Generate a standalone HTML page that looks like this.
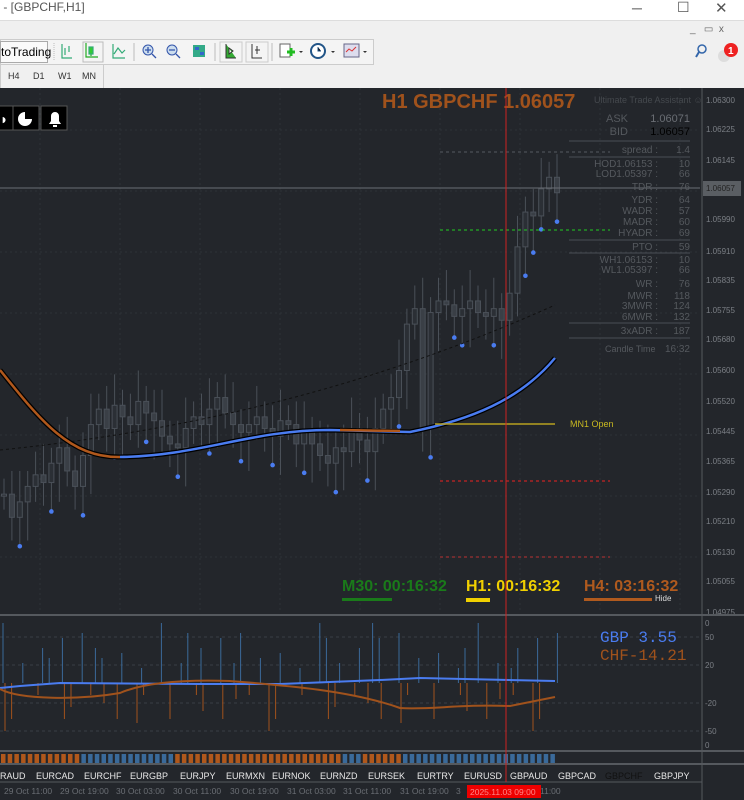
<!DOCTYPE html>
<html><head><meta charset="utf-8"><style>
*{margin:0;padding:0;box-sizing:border-box}
body{width:744px;height:800px;overflow:hidden;background:#fff;font-family:"Liberation Sans",sans-serif;position:relative}
.abs{position:absolute}
.tb{background:#f0f0f0}
.tf{position:absolute;top:71px;font-size:9px;color:#333}
</style></head><body>
<div class="abs" style="left:0;top:0;width:744px;height:20px;background:#fff;font-size:12px;color:#555;line-height:14px">&nbsp;- [GBPCHF,H1]</div>
<div class="abs" style="left:632px;top:0;font-size:14px;color:#555">─</div>
<div class="abs" style="left:677px;top:-1px;font-size:14px;color:#555">☐</div>
<div class="abs" style="left:715px;top:-1px;font-size:15px;color:#555">✕</div>
<div class="abs tb" style="left:0;top:20px;width:744px;height:68px;border-top:1px solid #ddd"></div>
<div class="abs" style="left:690px;top:24px;font-size:10px;color:#666">_&nbsp;&nbsp;&nbsp;&#9645;&nbsp;&nbsp;x</div>
<div class="abs" style="left:0;top:39px;width:374px;height:26px;border:1px solid #ccc;background:#f4f4f4"></div>
<div class="abs" style="left:0;top:41px;width:48px;height:22px;border:1px solid #aaa;background:#fafafa;font-size:12px;line-height:20px">toTrading</div>
<div class="abs" style="left:0;top:65px;width:104px;height:23px;border-right:1px solid #ccc;border-left:1px solid #ccc"></div>
<span class="tf" style="left:8px">H4</span><span class="tf" style="left:33px">D1</span><span class="tf" style="left:58px">W1</span><span class="tf" style="left:82px">MN</span>
<svg class="abs" style="left:0;top:40px" width="744" height="24">
<line x1="54" y1="3" x2="54" y2="21" stroke="#bbb" stroke-dasharray="1,1"/>
<g stroke="#3a7" fill="none" stroke-width="1.2">
<path d="M62 4v14h10M65 8v7M69 6v6"/><path d="M86 3v14h12M91 7v9" stroke="#2a2"/><rect x="89" y="7" width="4" height="7" fill="#3c3"/>
<path d="M113 4v14h12M114 14l4-6 4 5 3-3"/>
</g>
<rect x="83" y="2" width="20" height="20" fill="none" stroke="#bbb"/>
<line x1="134" y1="3" x2="134" y2="21" stroke="#bbb"/>
<circle cx="148" cy="10" r="5" fill="#cde" stroke="#35a"/><path d="M152 14l4 4M145 10h6M148 7v6" stroke="#35a" stroke-width="1.3"/>
<circle cx="172" cy="10" r="5" fill="#cde" stroke="#35a"/><path d="M176 14l4 4M169 10h6" stroke="#35a" stroke-width="1.3"/>
<rect x="193" y="5" width="12" height="12" fill="#3a8"/><rect x="195" y="7" width="4" height="3" fill="#36c"/><rect x="200" y="12" width="4" height="3" fill="#36c"/>
<line x1="215" y1="3" x2="215" y2="21" stroke="#bbb"/>
<rect x="220" y="2" width="22" height="20" fill="none" stroke="#ccc"/><rect x="246" y="2" width="22" height="20" fill="none" stroke="#ccc"/>
<path d="M226 4v14h10M229 8l4 3-4 3z" stroke="#333" fill="#3a3"/>
<path d="M252 4v14h10M257 6v8M255 10h5" stroke="#333" fill="none"/>
<line x1="272" y1="3" x2="272" y2="21" stroke="#bbb"/>
<rect x="280" y="4" width="10" height="13" fill="#fff" stroke="#666"/><path d="M287 12h8M291 8v8" stroke="#2b2" stroke-width="3"/>
<path d="M299 11l2 2 2-2z" fill="#333"/>
<circle cx="318" cy="11" r="7" fill="#fff" stroke="#258" stroke-width="2"/><path d="M318 7v4h3" stroke="#258"/>
<path d="M331 11l2 2 2-2z" fill="#333"/>
<rect x="344" y="4" width="15" height="13" fill="#dde" stroke="#668"/><path d="M346 12l3-3 3 2 4-4" stroke="#d33" fill="none"/>
<path d="M363 11l2 2 2-2z" fill="#333"/>
<circle cx="702" cy="9" r="4" fill="none" stroke="#36a" stroke-width="1.5"/><path d="M699 12l-3 5" stroke="#36a" stroke-width="2"/>
<circle cx="724" cy="16" r="6" fill="#ddd"/><circle cx="731" cy="10" r="7" fill="#e22"/><text x="728" y="14" font-size="10" fill="#fff" font-weight="bold">1</text>
</svg>
<svg class="abs" style="left:0;top:88px" width="744" height="712" id="ch">
<rect width="744" height="712" fill="#23262b"/>
</svg>
<script>
var s=document.getElementById('ch'),ns='http://www.w3.org/2000/svg';
function el(t,a,txt){var e=document.createElementNS(ns,t);for(var k in a)e.setAttribute(k,a[k]);if(txt!=null)e.textContent=txt;s.appendChild(e);return e}
var O=-88;
function Y(p){return 100+(1.063-p)/0.01325*512+O}
for(var gy=130;gy<600;gy+=61)el('line',{x1:0,y1:gy+O,x2:700,y2:gy+O,stroke:'#2e3237','stroke-dasharray':'2,3'});
for(var gx=40;gx<700;gx+=80)el('line',{x1:gx,y1:0,x2:gx,y2:525,stroke:'#2e3237','stroke-dasharray':'2,3'});
var path=[1.0528,1.0522,1.0526,1.0530,1.0533,1.0531,1.0536,1.0540,1.0534,1.0530,1.0538,1.0546,1.0550,1.0545,1.0551,1.0548,1.0546,1.0552,1.0549,1.0547,1.0543,1.0541,1.0540,1.0545,1.0548,1.0546,1.0550,1.0553,1.0549,1.0546,1.0544,1.0546,1.0548,1.0545,1.0543,1.0547,1.0546,1.0541,1.0544,1.0541,1.0538,1.0536,1.0540,1.0539,1.0545,1.0542,1.0539,1.0545,1.0550,1.0553,1.0560,1.0572,1.0576,1.0545,1.0575,1.0578,1.0577,1.0574,1.0576,1.0578,1.0575,1.0574,1.0576,1.0573,1.0580,1.0592,1.0601,1.0600,1.0607,1.0610,1.0606];
var prev=path[0];
for(var i=0;i<path.length;i++){var x=4+i*7.9,o=prev,c=path[i];var hi=Math.max(o,c)+0.0004+(i%3)*0.0002,lo=Math.min(o,c)-0.0004-(i%4)*0.0002;
el('line',{x1:x,y1:Y(hi),x2:x,y2:Y(lo),stroke:'#4a5058'});
var t=Math.min(Y(o),Y(c)),h=Math.max(2,Math.abs(Y(o)-Y(c)));
el('rect',{x:x-2.5,y:t,width:5,height:h,fill:c>=o?'#2b2f35':'#3a3f46',stroke:'#4a5058'});
prev=c;
if(i%4==2||i==57||i==67||i==68)el('circle',{cx:x,cy:Y(lo)-2,r:2.3,fill:'#4a7cf0'});}
el('path',{d:'M0 '+(450+O)+' Q300 '+(420+O)+' 555 '+(305+O),stroke:'#111',fill:'none','stroke-dasharray':'3,3'});
el('path',{d:'M0 '+(370+O)+' C40 '+(420+O)+' 70 '+(458+O)+' 120 '+(457+O)+' C200 '+(456+O)+' 250 '+(430+O)+' 330 '+(430+O)+' L410 '+(432+O)+' C470 '+(420+O)+' 520 '+(400+O)+' 555 '+(358+O),stroke:'#000',fill:'none','stroke-width':5});
el('path',{d:'M0 '+(370+O)+' C40 '+(420+O)+' 70 '+(458+O)+' 120 '+(457+O),stroke:'#b0581c',fill:'none','stroke-width':2.5});
el('path',{d:'M120 '+(457+O)+' C200 '+(456+O)+' 250 '+(430+O)+' 330 '+(430+O)+' L410 '+(432+O)+' C470 '+(420+O)+' 520 '+(400+O)+' 555 '+(358+O),stroke:'#4a7cf0',fill:'none','stroke-width':2.5});
el('path',{d:'M340 '+(430+O)+' L400 '+(431+O),stroke:'#b0581c',fill:'none','stroke-width':2.5});
el('line',{x1:0,y1:188+O,x2:700,y2:188+O,stroke:'#6a6e74'});
el('line',{x1:440,y1:152+O,x2:610,y2:152+O,stroke:'#555a60','stroke-dasharray':'3,3'});
el('line',{x1:440,y1:230+O,x2:610,y2:230+O,stroke:'#2c2','stroke-dasharray':'3,3'});
el('line',{x1:440,y1:481+O,x2:610,y2:481+O,stroke:'#e22','stroke-dasharray':'3,3'});
el('line',{x1:440,y1:557+O,x2:610,y2:557+O,stroke:'#b33','stroke-dasharray':'3,3'});
el('line',{x1:435,y1:424+O,x2:555,y2:424+O,stroke:'#b8a020','stroke-width':1.5});
el('text',{x:570,y:427+O,fill:'#c8b820','font-size':9},'MN1 Open');
var P=[['ASK',118,'1.06071','#6a6e74',11],['BID',131,'1.06057','#000',11],['spread :',149,'1.4'],['HOD1.06153 :',163,'10'],['LOD1.05397 :',173,'66'],['TDR :',186,'76'],['YDR :',199,'64'],['WADR :',210,'57'],['MADR :',221,'60'],['HYADR :',232,'69'],['PTO :',246,'59'],['WH1.06153 :',259,'10'],['WL1.05397 :',269,'66'],['WR :',283,'76'],['MWR :',295,'118'],['3MWR :',305,'124'],['6MWR :',316,'132'],['3xADR :',330,'187']];
P.forEach(function(r){el('text',{x:r[0]=='ASK'||r[0]=='BID'?628:658,y:r[1]+O+4,fill:'#55595e','font-size':r[4]||10,'text-anchor':'end'},r[0]);el('text',{x:690,y:r[1]+O+4,fill:r[3]||'#55595e','font-size':r[4]||10,'text-anchor':'end'},r[2]);});
el('text',{x:605,y:352+O,fill:'#55595e','font-size':9},'Candle Time');el('text',{x:690,y:352+O,fill:'#55595e','font-size':10,'text-anchor':'end'},'16:32');
[141,157,240,253,323,338].forEach(function(y){el('line',{x1:569,y1:y+O,x2:690,y2:y+O,stroke:'#4a4e54'})});
el('text',{x:594,y:103+O,fill:'#45494e','font-size':9},'Ultimate Trade Assistant ☺');
el('text',{x:382,y:108+O,fill:'#a0521c','font-size':20,'font-weight':'bold'},'H1 GBPCHF 1.06057');
[[-12],[13],[41]].forEach(function(b){el('rect',{x:b[0],y:106+O,width:26,height:24,fill:'#000',stroke:'#555'})});
el('text',{x:0,y:124+O,fill:'#fff','font-size':14,'font-weight':'bold'},'◗');
el('path',{d:'M25 112A7 7 0 1 0 32 119L25 119Z',fill:'#fff',transform:'translate(0,'+O+')'});
el('path',{d:'M49 124h12l-2-3v-5a4 4 0 0 0-8 0v5zM53 125h4v2h-4z',fill:'#fff',transform:'translate(0,'+O+')'});
el('line',{x1:702,y1:0,x2:702,y2:712,stroke:'#55595e'});
var A=[['1.06300',100],['1.06225',129],['1.06145',160],['1.05990',219],['1.05910',251],['1.05835',280],['1.05755',310],['1.05680',339],['1.05600',370],['1.05520',401],['1.05445',431],['1.05365',461],['1.05290',492],['1.05210',521],['1.05130',552],['1.05055',581],['1.04975',612]];
A.forEach(function(a){el('text',{x:706,y:a[1]+O+3,fill:'#7b7f85','font-size':8},a[0])});
el('rect',{x:703,y:181+O,width:38,height:15,fill:'#5a5e63'});
el('text',{x:706,y:191+O,fill:'#222','font-size':8},'1.06057');
el('text',{x:342,y:591+O,fill:'#1a7a1a','font-size':16,'font-weight':'bold'},'M30: 00:16:32');
el('text',{x:466,y:591+O,fill:'#f0d000','font-size':16,'font-weight':'bold'},'H1: 00:16:32');
el('text',{x:584,y:591+O,fill:'#b05a1e','font-size':16,'font-weight':'bold'},'H4: 03:16:32');
el('rect',{x:342,y:598+O,width:50,height:3,fill:'#1a7a1a'});el('rect',{x:466,y:598+O,width:24,height:4,fill:'#f0d000'});el('rect',{x:584,y:598+O,width:68,height:3,fill:'#b05a1e'});
el('text',{x:655,y:601+O,fill:'#ddd','font-size':8},'Hide');
el('line',{x1:0,y1:615+O,x2:744,y2:615+O,stroke:'#55595e','stroke-width':2});
[637,665,703,731].forEach(function(y){el('line',{x1:0,y1:y+O,x2:700,y2:y+O,stroke:'#3a3e44','stroke-dasharray':'3,3'})});
[['0',623],['50',637],['20',665],['-20',703],['-50',731],['0',745]].forEach(function(a){el('text',{x:705,y:a[1]+O+3,fill:'#7b7f85','font-size':8},a[0])});
for(var j=0;j<85;j++){var x=3+j*6.6,ht=[60,45,30,20,50,15,35,25][j%8];
if(j%3==0||j%7==0)el('line',{x1:x,y1:683+O,x2:x,y2:683-ht+O,stroke:'#3a6a9a'});
if(j%4==1||j%5==0)el('line',{x1:x+2,y1:683+O,x2:x+2,y2:683+ht*0.8+O,stroke:'#a0521c'});}
el('path',{d:'M0 '+(688+O)+' L20 '+(686+O)+' L60 '+(683+O)+' L200 '+(684+O)+' L280 '+(684+O)+' L380 '+(680+O)+' L420 '+(678+O)+' L555 '+(681+O),stroke:'#4a7cf0',fill:'none','stroke-width':2});
el('path',{d:'M0 '+(689+O)+' C20 '+(700+O)+' 80 '+(700+O)+' 120 '+(693+O)+' C150 '+(680+O)+' 200 '+(680+O)+' 230 '+(681+O)+' C280 '+(685+O)+' 350 '+(690+O)+' 400 '+(708+O)+' C430 '+(710+O)+' 460 '+(704+O)+' 510 '+(706+O)+' L555 '+(697+O),stroke:'#a0521c',fill:'none','stroke-width':2});
el('text',{x:600,y:642+O,fill:'#4a7cf0','font-size':16,'font-family':'Liberation Mono'},'GBP  3.55');
el('text',{x:600,y:660+O,fill:'#a0521c','font-size':16,'font-family':'Liberation Mono'},'CHF-14.21');
el('line',{x1:0,y1:751+O,x2:744,y2:751+O,stroke:'#55595e','stroke-width':2});
for(var k=0;k<83;k++){var x=1+k*6.7;var col=(x<79||(x>=171&&x<338)||(x>=362&&x<402))?'#b0581c':'#3a6a9a';el('rect',{x:x,y:754+O,width:4.5,height:9,fill:col})}
el('line',{x1:0,y1:764+O,x2:744,y2:764+O,stroke:'#55595e','stroke-width':2});
var PR=['RAUD','EURCAD','EURCHF','EURGBP','EURJPY','EURMXN','EURNOK','EURNZD','EURSEK','EURTRY','EURUSD','GBPAUD','GBPCAD','GBPCHF','GBPJPY'],PX=[0,36,84,130,180,226,272,320,368,417,464,510,558,605,654];
PR.forEach(function(p,i){el('text',{x:PX[i],y:779+O,fill:p=='GBPCHF'?'#111':'#e8e8e8','font-size':9},p)});
el('line',{x1:0,y1:782+O,x2:702,y2:782+O,stroke:'#55595e'});
var T=[['29 Oct 11:00',4],['29 Oct 19:00',60],['30 Oct 03:00',116],['30 Oct 11:00',173],['30 Oct 19:00',230],['31 Oct 03:00',287],['31 Oct 11:00',343],['31 Oct 19:00',400],['3',456],['11:00',540]];
T.forEach(function(t){el('text',{x:t[1],y:794+O,fill:'#6a6e74','font-size':8.5},t[0])});
el('rect',{x:467,y:785+O,width:74,height:13,fill:'#e00'});
el('text',{x:470,y:795+O,fill:'#f88','font-size':8.5},'2025.11.03 09:00');
el('line',{x1:506,y1:0,x2:506,y2:694,stroke:'#c22'});
</script>
</body></html>
